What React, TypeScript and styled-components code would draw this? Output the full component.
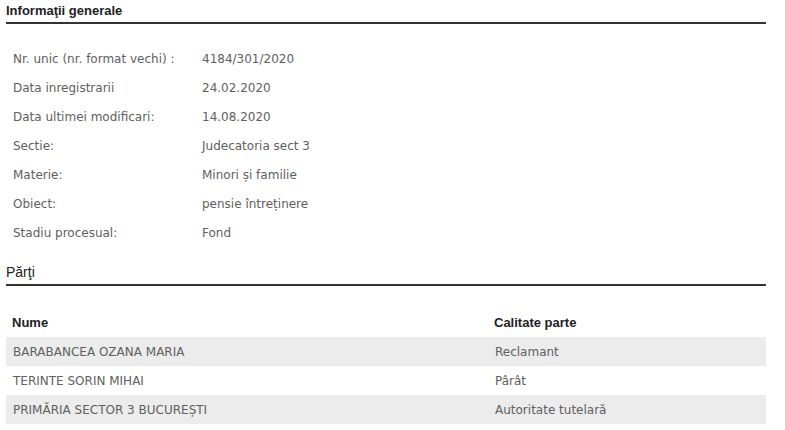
import React from 'react';
import styled, { createGlobalStyle } from 'styled-components';

const GlobalStyle = createGlobalStyle`
  body {
    margin: 0;
    background: #ffffff;
  }
`;

const Page = styled.div`
  width: 760px;
  padding: 0 0 0 6px;
  font-family: "DejaVu Sans", Verdana, sans-serif;
`;

const SectionTitle = styled.h2<{ $top?: number; $light?: boolean }>`
  margin: 0;
  padding: ${(p) => p.$top ?? 3}px 0 4px 0;
  font-family: "Liberation Sans", Arial, sans-serif;
  font-size: ${(p) => (p.$light ? 14 : 13)}px;
  font-weight: ${(p) => (p.$light ? 'normal' : 'bold')};
  line-height: 15px;
  color: #222;
  border-bottom: 2px solid #333;
`;

const InfoTable = styled.div`
  display: grid;
  grid-template-columns: 189px 1fr;
  margin-top: 20px;
  padding-left: 7px;
`;

const InfoCell = styled.div`
  height: 29px;
  display: flex;
  align-items: center;
  font-size: 12px;
  color: #606060;
  white-space: nowrap;
`;

const PartsTable = styled.div`
  margin-top: 22px;
`;

const PartsRow = styled.div<{ $shade?: boolean }>`
  display: grid;
  grid-template-columns: 482px 1fr;
  height: 29px;
  align-items: center;
  padding-left: 7px;
  background: ${(p) => (p.$shade ? '#ececec' : 'transparent')};
`;

const HeadCell = styled.div`
  font-family: "Liberation Sans", Arial, sans-serif;
  font-size: 13px;
  font-weight: bold;
  color: #222;
  margin-left: -1px;
`;

const BodyCell = styled.div`
  font-size: 12px;
  color: #606060;
  white-space: nowrap;
`;

const info: [string, string][] = [
  ['Nr. unic (nr. format vechi) :', '4184/301/2020'],
  ['Data inregistrarii', '24.02.2020'],
  ['Data ultimei modificari:', '14.08.2020'],
  ['Sectie:', 'Judecatoria sect 3'],
  ['Materie:', 'Minori și familie'],
  ['Obiect:', 'pensie întreținere'],
  ['Stadiu procesual:', 'Fond'],
];

const parts: [string, string][] = [
  ['BARABANCEA OZANA MARIA', 'Reclamant'],
  ['TERINTE SORIN MIHAI', 'Pârât'],
  ['PRIMĂRIA SECTOR 3 BUCUREȘTI', 'Autoritate tutelară'],
];

export default function App() {
  return (
    <Page>
      <GlobalStyle />
      <SectionTitle>Informaţii generale</SectionTitle>
      <InfoTable>
        {info.map(([label, value]) => (
          <React.Fragment key={label}>
            <InfoCell>{label}</InfoCell>
            <InfoCell>{value}</InfoCell>
          </React.Fragment>
        ))}
      </InfoTable>
      <SectionTitle $top={18} $light>Părţi</SectionTitle>
      <PartsTable>
        <PartsRow>
          <HeadCell>Nume</HeadCell>
          <HeadCell>Calitate parte</HeadCell>
        </PartsRow>
        {parts.map(([name, role], i) => (
          <PartsRow key={name} $shade={i % 2 === 0}>
            <BodyCell>{name}</BodyCell>
            <BodyCell>{role}</BodyCell>
          </PartsRow>
        ))}
      </PartsTable>
    </Page>
  );
}
